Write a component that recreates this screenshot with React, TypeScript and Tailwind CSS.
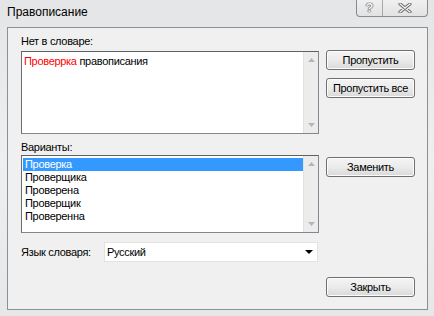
import React from "react";

const font = { fontFamily: '"Liberation Sans", Arial, sans-serif' };

function Btn({ children }: { children: React.ReactNode }) {
  return (
    <div className="w-[89px] h-[20px] flex items-center justify-center rounded-[3px] border border-[#707070] bg-gradient-to-b from-[#f4f4f4] via-[#ebebeb] to-[#d9d9d9] text-black shadow-[inset_0_0_0_1px_#fcfcfc]">
      {children}
    </div>
  );
}

function ScrollBar() {
  return (
    <div className="w-[15px] h-full bg-[#ececec] border-l border-[#e2e2e2] flex flex-col items-center justify-between py-[6px]">
      <svg width="7" height="4" viewBox="0 0 7 4"><path d="M0 4 L3.5 0 L7 4 Z" fill="#b6b6b6" /></svg>
      <svg width="7" height="4" viewBox="0 0 7 4"><path d="M0 0 L3.5 4 L7 0 Z" fill="#b6b6b6" /></svg>
    </div>
  );
}

export default function App() {
  const items = ["Проверка", "Проверщика", "Проверена", "Проверщик", "Проверенна"];
  return (
    <div style={font} className="w-[434px] h-[316px] bg-gradient-to-b from-[#e4e5e7] via-[#eeeff0] to-[#e6e7e8] overflow-hidden flex flex-col">
      <div className="h-[27px] flex items-start justify-between">
        <div className="pl-[7px] pt-[5px] text-[12px] text-black leading-[15px]">Правописание</div>
        <div className="flex mr-[6px] h-[17px] border border-t-0 border-[#8c8c8c] rounded-b-[4px] bg-gradient-to-b from-[#f0f0f0] to-[#e2e2e2] overflow-hidden">
          <div className="w-[26px] h-full flex items-center justify-center border-r border-[#a8a8a8] text-[13px] font-bold text-[#f8f8f8] [text-shadow:0_0_1px_#444,0_0_1px_#444,0_0_1px_#444]">?</div>
          <div className="w-[44px] h-full flex items-center justify-center">
            <svg width="14" height="10" viewBox="0 0 14 10">
              <path d="M2 1 L12 9 M12 1 L2 9" stroke="#666" strokeWidth="3.2" strokeLinecap="round" />
              <path d="M2 1 L12 9 M12 1 L2 9" stroke="#f6f6f6" strokeWidth="1.4" strokeLinecap="round" />
            </svg>
          </div>
        </div>
      </div>
      <div className="ml-[7px] w-[421px] h-[283px] border border-[#8e8f8f] bg-[#f0f0f0] pl-[13px] pr-[12px] flex flex-col text-[11px] tracking-[-0.3px] text-black">
        <div className="flex gap-[7px] mt-[7px]">
          <div className="w-[298px] flex flex-col">
            <div className="h-[13px] leading-[13px] mb-[3px]">Нет в словаре:</div>
            <div className="h-[83px] border border-[#828790] border-t-[#5f6165] border-l-[#6a6c70] bg-white flex">
              <div className="flex-1 pl-[2px] pt-[3px] leading-[13px]">
                <span className="text-[#ff0000]">Проверрка</span> правописания
              </div>
              <ScrollBar />
            </div>
          </div>
          <div className="flex flex-col mt-[15px] gap-[8px]">
            <Btn>Пропустить</Btn>
            <Btn>Пропустить все</Btn>
          </div>
        </div>
        <div className="flex gap-[7px] mt-[7px]">
          <div className="w-[298px] flex flex-col">
            <div className="h-[13px] leading-[13px] mb-[1px]">Варианты:</div>
            <div className="h-[78px] border border-[#828790] border-t-[#5f6165] border-l-[#6a6c70] bg-white flex">
              <div className="flex-1 pl-[1px] pt-[2px] flex flex-col">
                {items.map((t, i) => (
                  <div
                    key={t}
                    className={
                      i === 0
                        ? "h-[13px] leading-[13px] pl-[2px] bg-[#3399ff] text-white"
                        : "h-[13px] leading-[13px] pl-[2px]"
                    }
                  >
                    {t}
                  </div>
                ))}
              </div>
              <ScrollBar />
            </div>
          </div>
          <div className="flex flex-col mt-[16px]">
            <Btn>Заменить</Btn>
          </div>
        </div>
        <div className="flex items-center mt-[9px]">
          <div className="w-[83px]">Язык словаря:</div>
          <div className="w-[214px] h-[20px] bg-white border border-[#e3e3e3] flex items-center justify-between pl-[2px] pr-[4px]">
            <span>Русский</span>
            <svg width="8" height="4" viewBox="0 0 8 4"><path d="M0 0 L8 0 L4 4 Z" fill="#000" /></svg>
          </div>
        </div>
        <div className="flex justify-end mt-[15px]">
          <Btn>Закрыть</Btn>
        </div>
      </div>
    </div>
  );
}
